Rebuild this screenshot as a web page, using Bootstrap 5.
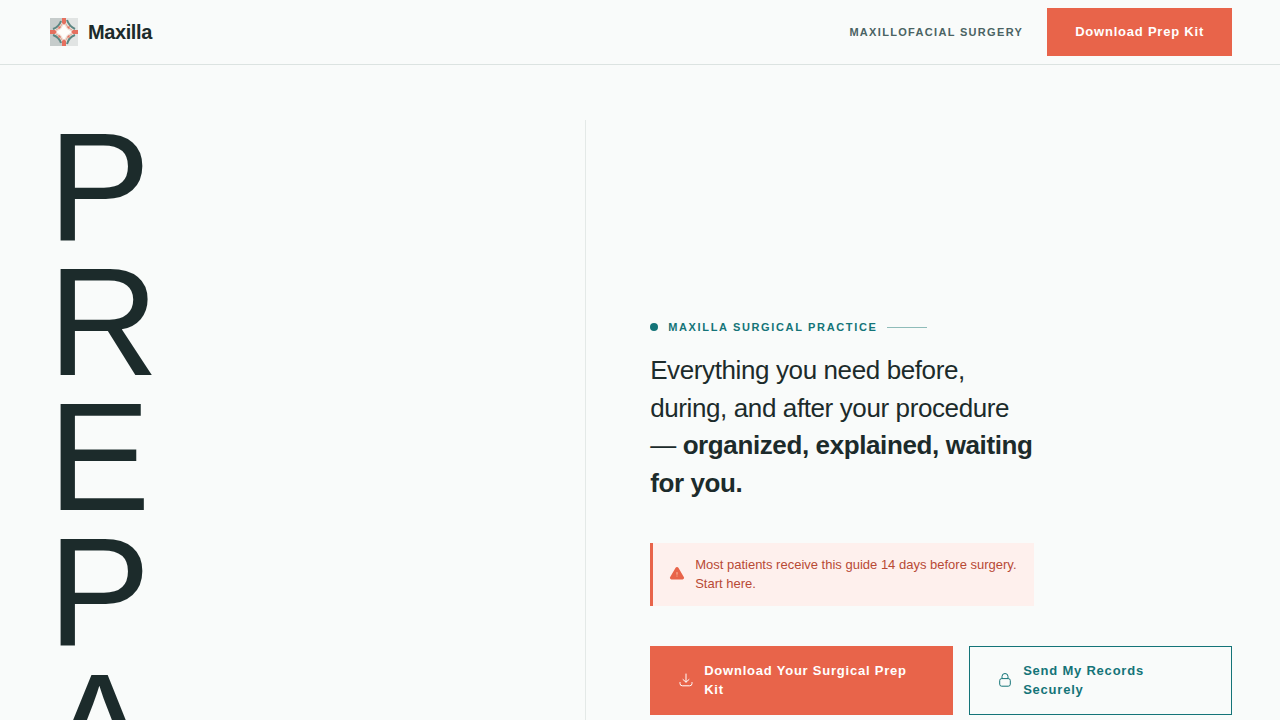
<!DOCTYPE html>
<html lang="en">
<head>
<meta charset="utf-8">
<meta name="viewport" content="width=device-width, initial-scale=1">
<title>Maxilla</title>
<link href="https://cdn.jsdelivr.net/npm/bootstrap@5.3.0/dist/css/bootstrap.min.css" rel="stylesheet">
<style>
  :root { --ink: #1c2b2b; --teal: #147478; --coral: #e8644a; --paper: #f9fbfa; }
  body { font-family: "Liberation Sans", Arial, sans-serif; background: var(--paper); color: var(--ink); }
  .site-bar { background: var(--paper); border-bottom: 1px solid #dce3e1; padding: 8px 48px; }
  .brand-name { font-size: 20px; font-weight: 700; line-height: 28px; letter-spacing: -0.02em; color: var(--ink); gap: 8px; }
  .specialty { font-size: 11px; font-weight: 700; letter-spacing: 0.12em; color: #4a6363; text-transform: uppercase; }
  .action { --bs-btn-font-size: 13px; --bs-btn-font-weight: 700; --bs-btn-border-radius: 0; --bs-btn-padding-x: 27px; --bs-btn-padding-y: 14px; letter-spacing: 0.06em; min-height: 48px; gap: 10px; }
  .bar-action { --bs-btn-padding-y: 13px; }
  .action-coral { --bs-btn-color: #fff; --bs-btn-bg: var(--coral); --bs-btn-border-color: var(--coral); --bs-btn-hover-color: #fff; --bs-btn-hover-bg: #d4553d; --bs-btn-hover-border-color: #d4553d; }
  .action-teal { --bs-btn-color: var(--teal); --bs-btn-border-color: var(--teal); --bs-btn-hover-color: #fff; --bs-btn-hover-bg: var(--teal); }
  .hero { display: grid; grid-template-columns: 5fr 6fr; padding: 120px 48px 0; }
  .hero-word { font-size: 12vw; line-height: 0.88; font-weight: 400; border-right: 1px solid #e4e9e7; }
  .hero-copy { padding: 198px 0 0 64px; }
  .eyebrow { font-size: 11px; font-weight: 700; letter-spacing: 0.15em; line-height: 18px; color: var(--teal); text-transform: uppercase; gap: 10px; }
  .eyebrow-dot { width: 8px; height: 8px; background: var(--teal); }
  .eyebrow-rule { width: 40px; height: 1px; background: #8fbcb9; }
  .lede { font-size: 26px; line-height: 1.45; letter-spacing: -0.015em; max-width: 384px; margin: 16px 0 40px; }
  .notice { max-width: 384px; font-size: 13px; line-height: 1.5; color: #b84a35; background: #fef0ed; border-left: 3px solid var(--coral); padding: 12px 16px; gap: 10px; margin-bottom: 40px; }
</style>
</head>
<body>
<nav class="site-bar fixed-top d-flex align-items-center justify-content-between">
  <a class="brand-name d-flex align-items-center text-decoration-none" href="#">
    <svg width="32" height="28" viewBox="0 0 32 28" aria-hidden="true">
      <path fill="#c6cccb" d="M2 0h28v28H2z"/>
      <path fill="#e1e4e3" d="M16 0h14v28H16z"/>
      <path fill="#eedfd7" d="M16 2l12 12-12 12L4 14z"/>
      <g fill="none" stroke="#5c8783" stroke-width="2"><path d="M13 3q-2 6-8 8M19 2q2 6 8 9M5 17q6 2 8 8M27 17q-6 2-8 9"/></g>
      <g fill="none" stroke="#e3a593"><path d="M14 6q-1 4-6 6M18 6q1 4 6 6M8 16q5 2 6 6M24 16q-5 2-6 6"/></g>
      <path fill="#e5705f" d="M14 0h4v5l-2 2-2-2zM14 28h4v-5l-2-2-2 2zM2 12h5l2 2-2 2H2zM30 12h-5l-2 2 2 2h5zM10 8l3 1-2 2zM22 8l-3 1 2 2zM10 20l3-1-2-2zM22 20l-3-1 2-2z"/>
      <path fill="#fffdfb" d="M16 6l3 5 5 3-5 3-3 5-3-5-5-3 5-3z"/>
    </svg>
    <span>Maxilla</span>
  </a>
  <div class="d-flex align-items-center gap-4">
    <span class="specialty">Maxillofacial Surgery</span>
    <button type="button" class="btn action action-coral bar-action">Download Prep Kit</button>
  </div>
</nav>
<main class="hero min-vh-100">
  <h1 class="hero-word m-0" aria-label="PREPA">P<br>R<br>E<br>P<br>A</h1>
  <section class="hero-copy">
    <div class="eyebrow d-flex align-items-center">
      <span class="eyebrow-dot rounded-circle"></span>
      <span>Maxilla Surgical Practice</span>
      <span class="eyebrow-rule"></span>
    </div>
    <p class="lede">Everything you need before, during, and after your procedure — <strong>organized, explained, waiting for you.</strong></p>
    <div class="notice d-flex align-items-center" role="note">
      <svg class="flex-shrink-0" width="16" height="16" viewBox="0 0 16 16" aria-hidden="true"><path fill="#e8644a" d="M6.600 1.800a1.600 1.600 0 0 1 2.800 0l5.400 9.200a1.500 1.500 0 0 1-1.300 2.400H2.500a1.500 1.500 0 0 1-1.300-2.400z"/><path stroke="#fbc0a5" stroke-linecap="round" d="M8 6.500v1.800M8 10v.1"/></svg>
      <span>Most patients receive this guide 14 days before surgery. Start here.</span>
    </div>
    <div class="d-flex gap-3">
      <button type="button" class="btn action action-coral d-flex align-items-center text-start">
        <svg class="flex-shrink-0" width="16" height="16" viewBox="0 0 16 16" fill="none" stroke="#fff" stroke-linecap="round" stroke-linejoin="round" aria-hidden="true"><path d="M8 2v8M5 7.500L8 10.200l3-2.700M2 10.500v1a2.300 2.300 0 0 0 2.300 2.300h7.400A2.300 2.300 0 0 0 14 11.500v-1"/></svg>
        <span>Download Your Surgical Prep Kit</span>
      </button>
      <button type="button" class="btn action action-teal d-flex align-items-center text-start">
        <svg class="flex-shrink-0" width="16" height="16" viewBox="0 0 16 16" fill="none" stroke="currentColor" aria-hidden="true"><rect x="2.700" y="6.600" width="10.600" height="7.600" rx="2"/><path d="M5 6.600V4.500a3 3 0 0 1 6 0v2.100"/></svg>
        <span>Send My Records Securely</span>
      </button>
    </div>
  </section>
</main>
<script src="https://cdn.jsdelivr.net/npm/bootstrap@5.3.0/dist/js/bootstrap.bundle.min.js"></script>
</body>
</html>
